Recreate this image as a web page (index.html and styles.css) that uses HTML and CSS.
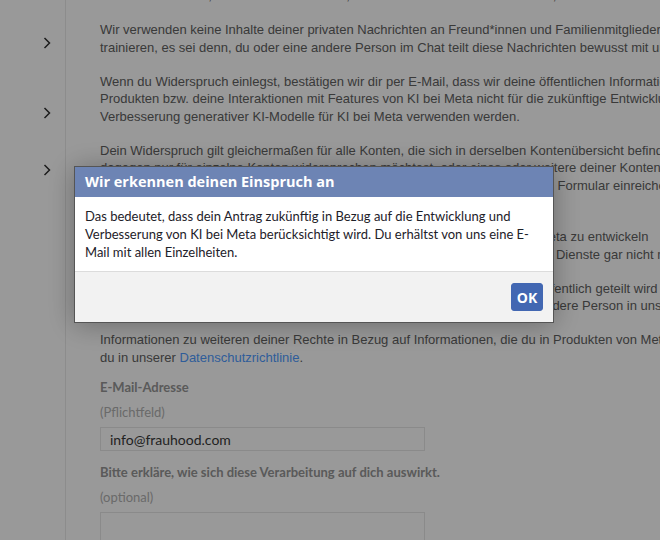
FILE: index.html
```html
<!DOCTYPE html>
<html lang="de">
<head>
  <meta charset="UTF-8" />
  <title>Widerspruch – KI bei Meta</title>
  <link rel="stylesheet" href="styles.css">
</head>
<body>

<div class="page">
  <nav class="sidebar">
    <div class="nav-item nav-first"><svg class="chevron" viewBox="0 0 8 12"><polyline points="1.5,1 6.5,6 1.5,11" /></svg></div>
    <div class="nav-item nav-second"><svg class="chevron" viewBox="0 0 8 12"><polyline points="1.5,1 6.5,6 1.5,11" /></svg></div>
    <div class="nav-item nav-third"><svg class="chevron" viewBox="0 0 8 12"><polyline points="1.5,1 6.5,6 1.5,11" /></svg></div>
  </nav>

  <main class="content">
    <p>Wenn du möchtest, dass wir Informationen, die du in Produkten von Meta teilst, nicht mehr für diese Zwecke verwenden, gilt Folgendes:</p>
    <p>Wir verwenden keine Inhalte deiner privaten Nachrichten an Freund*innen und Familienmitglieder, um unsere KIs zu<br>trainieren, es sei denn, du oder eine andere Person im Chat teilt diese Nachrichten bewusst mit unseren KIs.</p>
    <p>Wenn du Widerspruch einlegst, bestätigen wir dir per E-Mail, dass wir deine öffentlichen Informationen aus Meta-<br>Produkten bzw. deine Interaktionen mit Features von KI bei Meta nicht für die zukünftige Entwicklung und<br>Verbesserung generativer KI-Modelle für KI bei Meta verwenden werden.</p>
    <p>Dein Widerspruch gilt gleichermaßen für alle Konten, die sich in derselben Kontenübersicht befinden. Wenn du<br>dagegen nur für einzelne Konten widersprechen möchtest, oder eines oder weitere deiner Konten<br>nicht in derselben Kontenübersicht befinden, müsstest du für diese ein eigenes Formular einreichen.<br>Melde dich dazu mit dem entsprechenden Konto an.</p>
    <p>Wir nutzen deine Informationen aufgrund berechtigter Interessen, um KI bei Meta zu entwickeln<br>und zu verbessern. Dein Widerspruch bedeutet übrigens nicht, dass du unsere Dienste gar nicht mehr nutzen kannst.</p>
    <p>Auch nach einem Widerspruch kann es vorkommen, dass deine Information öffentlich geteilt wird<br>und anschließend verarbeitet wird, beispielsweise wenn du selbst oder eine andere Person in unseren Produkten darüber sprichst.</p>
    <p>Informationen zu weiteren deiner Rechte in Bezug auf Informationen, die du in Produkten von Meta teilst, findest<br>du in unserer <a href="#">Datenschutzrichtlinie</a>.</p>

    <form class="objection-form">
      <label class="field-label" for="email">E-Mail-Adresse</label>
      <div class="field-hint">(Pflichtfeld)</div>
      <input class="field-input" id="email" type="text" value="info@frauhood.com">
      <label class="field-label" for="impact">Bitte erkläre, wie sich diese Verarbeitung auf dich auswirkt.</label>
      <div class="field-hint">(optional)</div>
      <textarea class="field-textarea" id="impact"></textarea>
    </form>
  </main>
</div>

<div class="overlay"></div>

<div class="dialog" role="dialog">
  <div class="dialog-header">Wir erkennen deinen Einspruch an</div>
  <div class="dialog-body">Das bedeutet, dass dein Antrag zukünftig in Bezug auf die Entwicklung und Verbesserung von KI bei Meta berücksichtigt wird. Du erhältst von uns eine E-Mail mit allen Einzelheiten.</div>
  <div class="dialog-footer">
    <button type="button" class="btn-ok">OK</button>
  </div>
</div>

</body>
</html>
```

FILE: styles.css
```css
body {
  font-family: "Liberation Sans", Arial, sans-serif;
  background: #fff;
  margin: 0;
  overflow: hidden;
  height: 540px;
}
.page {
  display: flex;
  align-items: flex-start;
}
.sidebar {
  width: 65px;
  flex-shrink: 0;
  min-height: 600px;
  border-right: 1px solid #e9e9e9;
}
.nav-item {
  display: flex;
  justify-content: flex-end;
  align-items: center;
  padding-right: 14px;
}
.nav-first {
  height: 86px;
}
.nav-second {
  height: 54px;
}
.nav-third {
  height: 60px;
}
.chevron {
  width: 8px;
  height: 12px;
}
.chevron polyline {
  fill: none;
  stroke: #303030;
  stroke-width: 1.5;
}
.content {
  flex-shrink: 0;
  width: 760px;
  margin-top: -13px;
  padding-left: 34px;
  font-size: 13px;
  line-height: 17.5px;
  color: #616161;
}
.content p {
  margin: 0 0 16.5px;
  white-space: nowrap;
}
.content a {
  color: #4f9bff;
  text-decoration: none;
}
.objection-form {
  display: flex;
  flex-direction: column;
  align-items: flex-start;
  font-family: Lato, "Liberation Sans", sans-serif;
  margin-top: -3.5px;
}
.field-label {
  font-size: 13px;
  font-weight: bold;
  line-height: 16px;
  color: #969696;
}
.field-hint {
  font-size: 13px;
  line-height: 16px;
  color: #b1b1b1;
  margin-top: 9px;
}
.field-input, .field-textarea {
  box-sizing: border-box;
  width: 325px;
  margin-top: 7px;
  border: 1px solid #e6e6e6;
  background: #fff;
  font-family: Lato, "Liberation Sans", sans-serif;
  font-size: 14px;
  color: #393939;
  padding: 0 9px;
}
.field-input {
  height: 24px;
  margin-bottom: 13px;
}
.field-textarea {
  height: 80px;
  resize: none;
}
.overlay {
  position: fixed;
  inset: 0;
  background: rgba(0, 0, 0, 0.4);
}
.dialog {
  position: fixed;
  left: 74px;
  top: 166px;
  width: 478px;
  border: 1px solid #555;
  box-shadow: 0 2px 26px rgba(0, 0, 0, 0.3);
  font-family: Lato, "Liberation Sans", sans-serif;
}
.dialog-header {
  height: 30px;
  line-height: 30px;
  padding: 0 10px;
  background: #6d84b4;
  color: #fff;
  font-family: "Open Sans", Lato, sans-serif;
  font-size: 14.5px;
  font-weight: bold;
}
.dialog-body {
  background: #fff;
  padding: 10px;
  font-size: 13px;
  line-height: 18px;
  color: #1d2129;
}
.dialog-footer {
  background: #f2f2f2;
  border-top: 1px solid #dcdcdc;
  padding: 11px 10px;
  text-align: right;
}
.btn-ok {
  height: 28px;
  width: 32px;
  padding: 0;
  border: 1px solid #4267b2;
  border-radius: 3px;
  background: #4267b2;
  color: #fff;
  font-family: "Open Sans", Lato, sans-serif;
  font-size: 14px;
  font-weight: bold;
  cursor: pointer;
}
```
